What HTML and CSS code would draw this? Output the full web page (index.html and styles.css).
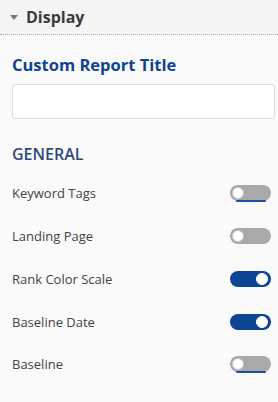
FILE: index.html
```html
<!DOCTYPE html>
<html>
  <head>
    <title>Display settings</title>
    <link rel="stylesheet" href="styles.css">
  </head>
  <body>
    <div class="panel">
      <div class="panel-head">
        <span class="caret"></span>
        <span class="panel-title">Display</span>
      </div>
      <div class="panel-body">
        <label class="field-title" for="reportTitle">Custom Report Title</label>
        <input id="reportTitle" class="field-input" autocomplete="off" />

        <h3 class="group-title">GENERAL</h3>
        <ul class="toggles">
          <li><span>Keyword Tags</span><span class="switch line"><i></i></span></li>
          <li><span>Landing Page</span><span class="switch"><i></i></span></li>
          <li><span>Rank Color Scale</span><span class="switch on"><i></i></span></li>
          <li><span>Baseline Date</span><span class="switch on"><i></i></span></li>
          <li><span>Baseline</span><span class="switch line"><i></i></span></li>
        </ul>
      </div>
    </div>
  </body>
</html>
```
FILE: styles.css
```css
body { margin: 0; background: #fafafa; font-family: "Open Sans", "Liberation Sans", sans-serif; }

.panel { width: 278px; }
.panel-head { display: flex; align-items: center; height: 34px; background: #f4f4f4; border-bottom: 1px dotted #aaa; padding-left: 10px; }
.caret { width: 0; height: 0; border-left: 4px solid transparent; border-right: 4px solid transparent; border-top: 5px solid #777; margin-right: 8px; margin-top: 1px; }
.panel-title { font-size: 16px; font-weight: 700; color: #3a3a3a; }

.panel-body { padding: 18px 3px 0 12px; }
.field-title { display: block; font-size: 16.5px; line-height: 24px; font-weight: 700; color: #0d4592; }
.field-input { display: block; box-sizing: border-box; width: 263px; height: 35px; margin-top: 7px; border: 1px solid #ddd; border-radius: 3px; background: #fff; }
.field-input:focus { outline: none; }

.group-title { margin: 25px 0 0; font-size: 16px; line-height: 20px; font-weight: 600; color: #2d4a7a; }

.toggles { list-style-type: none; margin: 8px 0 0; padding: 0; }
.toggles > li { display: flex; align-items: center; justify-content: space-between; height: 42.75px; font-size: 13px; color: #444; padding-right: 4px; }

.switch { position: relative; box-sizing: border-box; width: 41px; height: 16px; border-radius: 8px; background: #a9a9a9; }
.switch i { position: absolute; top: 2px; left: 2px; width: 12px; height: 12px; box-sizing: border-box; border-radius: 50%; background: #fff; border: 1px solid #c8c8c8; }
.switch.on { background: #0c4593; }
.switch.on i { left: auto; right: 3px; border-color: #fff; }
.switch.line::after { content: ""; position: absolute; left: 6px; right: 5px; bottom: -1px; height: 2px; background: #1b4fa0; border-radius: 1px; }
```
